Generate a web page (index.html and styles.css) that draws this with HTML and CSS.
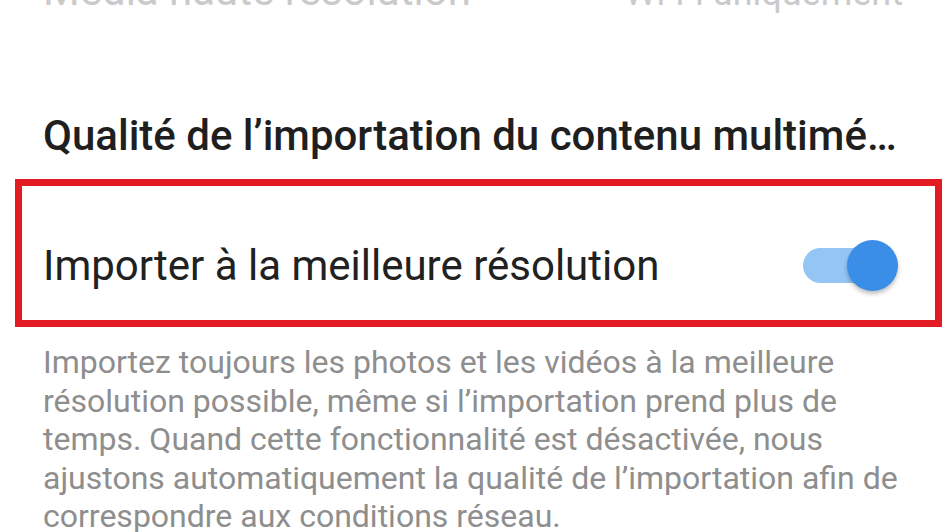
FILE: index.html
```html
<!DOCTYPE html>
<html lang="fr">
<head>
  <meta charset="UTF-8">
  <meta name="viewport" content="width=device-width, initial-scale=1">
  <title>Paramètres - Importation</title>
  <link rel="stylesheet" href="styles.css">
</head>
<body>
  <!-- Previous setting, scrolled mostly out of view -->
  <div class="setting-faded">
    <span class="faded-title">Média haute résolution</span>
    <span class="faded-value">Wi-Fi uniquement</span>
  </div>

  <!-- Section title -->
  <h2 class="section-title">Qualité de l’importation du contenu multimé…</h2>

  <!-- Highlighted toggle row -->
  <div class="highlight">
    <div class="toggle-row">
      <span class="toggle-label">Importer à la meilleure résolution</span>
      <span class="switch on"><span class="thumb"></span></span>
    </div>
  </div>

  <p class="description">Importez toujours les photos et les vidéos à la meilleure résolution possible, même si l’importation prend plus de temps. Quand cette fonctionnalité est désactivée, nous ajustons automatiquement la qualité de l’importation afin de correspondre aux conditions réseau.</p>
</body>
</html>
```

FILE: styles.css
```css
/* Global reset */
* {
  margin: 0;
  padding: 0;
  box-sizing: border-box;
}
body {
  font-family: Roboto, "Noto Sans", sans-serif;
  background-color: #fff;
  color: #212121;
  width: 945px;
  height: 532px;
  overflow: hidden;
}
/* Faded setting at the top */
.setting-faded {
  display: flex;
  justify-content: space-between;
  align-items: baseline;
  margin-top: -34px;
  padding: 0 42px 0 43px;
  line-height: 50px;
  color: #cacaca;
  white-space: nowrap;
}
.faded-title {
  font-size: 42px;
}
.faded-value {
  font-size: 36px;
}
/* Section title */
.section-title {
  font-size: 42px;
  font-weight: 500;
  line-height: 50px;
  margin-top: 93px;
  padding-left: 43px;
  white-space: nowrap;
  color: #1f1f1f;
}
/* Red highlight box */
.highlight {
  margin: 18px 3px 0 15px;
  border: 7px solid #e31b23;
  height: 148px;
  display: flex;
  align-items: center;
}
.toggle-row {
  flex: 1;
  display: flex;
  justify-content: space-between;
  align-items: center;
  padding: 25px 44px 0 21px;
}
.toggle-label {
  font-size: 42px;
  line-height: 50px;
}
/* Switch */
.switch {
  position: relative;
  width: 88px;
  height: 35px;
  border-radius: 18px;
  background-color: #93c5f5;
}
.switch .thumb {
  position: absolute;
  right: -7px;
  top: -8px;
  width: 51px;
  height: 51px;
  border-radius: 50%;
  background-color: #3a8ee8;
  box-shadow: 0 3px 4px rgba(0,0,0,0.25);
}
/* Description text */
.description {
  margin-top: 16px;
  padding: 0 30px 0 43px;
  font-size: 32px;
  line-height: 38.5px;
  color: #8e8e8e;
}
```
